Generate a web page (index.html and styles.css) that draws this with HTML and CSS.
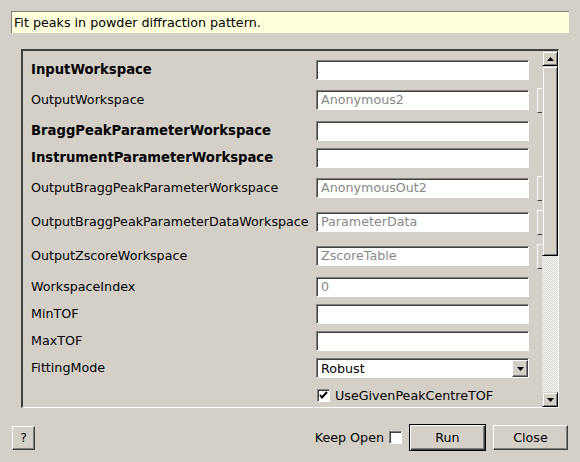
FILE: index.html
```html
<!DOCTYPE html>
<html lang="en">

<head>
  <meta charset="UTF-8" />
  <title>FitPowderDiffPeaks</title>
  <link rel="stylesheet" href="styles.css">
</head>

<body>
  <div class="dialog">

    <!-- Descripcion del algoritmo -->
    <div class="description">Fit peaks in powder diffraction pattern.</div>

    <!-- Propiedades -->
    <div class="scroll-frame">
      <div class="viewport">

        <div class="row">
          <span class="prop-label required">InputWorkspace</span>
          <div class="field"></div>
        </div>

        <div class="row tall">
          <span class="prop-label">OutputWorkspace</span>
          <div class="field">Anonymous2</div>
          <button class="browse"></button>
        </div>

        <div class="row">
          <span class="prop-label required">BraggPeakParameterWorkspace</span>
          <div class="field"></div>
        </div>

        <div class="row">
          <span class="prop-label required">InstrumentParameterWorkspace</span>
          <div class="field"></div>
        </div>

        <div class="row tall">
          <span class="prop-label">OutputBraggPeakParameterWorkspace</span>
          <div class="field">AnonymousOut2</div>
          <button class="browse"></button>
        </div>

        <div class="row tall">
          <span class="prop-label">OutputBraggPeakParameterDataWorkspace</span>
          <div class="field">ParameterData</div>
          <button class="browse"></button>
        </div>

        <div class="row tall">
          <span class="prop-label">OutputZscoreWorkspace</span>
          <div class="field">ZscoreTable</div>
          <button class="browse"></button>
        </div>

        <div class="row">
          <span class="prop-label">WorkspaceIndex</span>
          <div class="field">0</div>
        </div>

        <div class="row">
          <span class="prop-label">MinTOF</span>
          <div class="field"></div>
        </div>

        <div class="row">
          <span class="prop-label">MaxTOF</span>
          <div class="field"></div>
        </div>

        <div class="row">
          <span class="prop-label">FittingMode</span>
          <div class="combo">
            <span class="combo-text">Robust</span>
            <span class="combo-btn">
              <svg width="7" height="4" viewBox="0 0 7 4"><path d="M0 0h7L3.5 4z" fill="#000"/></svg>
            </span>
          </div>
        </div>

        <div class="row">
          <span class="prop-label"></span>
          <div class="check-field">
            <span class="check">
              <svg width="9" height="9" viewBox="0 0 9 9"><path d="M1 4l2 2.5L8 1" fill="none" stroke="#000" stroke-width="2"/></svg>
            </span>
            <span>UseGivenPeakCentreTOF</span>
          </div>
        </div>

      </div>

      <!-- Barra de desplazamiento -->
      <div class="scrollbar">
        <div class="sb-btn">
          <svg width="7" height="4" viewBox="0 0 7 4"><path d="M0 4h7L3.5 0z" fill="#000"/></svg>
        </div>
        <div class="sb-handle"></div>
        <div class="sb-track"></div>
        <div class="sb-btn">
          <svg width="7" height="4" viewBox="0 0 7 4"><path d="M0 0h7L3.5 4z" fill="#000"/></svg>
        </div>
      </div>
    </div>

    <!-- Botones -->
    <div class="buttons">
      <button class="btn help">?</button>
      <div class="spacer"></div>
      <span class="keep-open">Keep Open</span>
      <span class="check"></span>
      <button class="btn default">Run</button>
      <button class="btn">Close</button>
    </div>

  </div>
</body>

</html>
```

FILE: styles.css
```css
body {
  margin: 0;
  background: #d4d0c8;
  font-family: "DejaVu Sans", sans-serif;
  font-size: 12.7px;
  color: #000;
}

.dialog {
  width: 580px;
  height: 462px;
  padding-top: 11px;
  box-sizing: border-box;
}

.description {
  margin-left: 11px;
  width: 558px;
  height: 22px;
  box-sizing: border-box;
  background: #ffffdc;
  border-top: 1px solid #808080;
  border-left: 1px solid #808080;
  padding-left: 2px;
  line-height: 21px;
}

.scroll-frame {
  display: flex;
  margin: 16px 0 0 21px;
  width: 538px;
  height: 359px;
  box-sizing: border-box;
  border-style: solid;
  border-width: 2px 1px 1px 2px;
  border-color: #404040 #fff #fff #404040;
}

.viewport {
  flex: 1;
  overflow: hidden;
  padding: 9px 0 0 8px;
  display: flex;
  flex-direction: column;
  gap: 7px;
}

.row {
  display: flex;
  align-items: center;
  height: 20px;
  flex-shrink: 0;
}

.row.tall {
  height: 27px;
  align-items: flex-start;
}

.row.tall .field,
.row.tall .prop-label {
  margin-top: 3px;
}

.prop-label {
  width: 285px;
  flex-shrink: 0;
  white-space: nowrap;
  line-height: 20px;
}

.prop-label.required {
  font-weight: bold;
  font-size: 13.2px;
}

.field,
.combo {
  width: 213px;
  height: 20px;
  flex-shrink: 0;
  box-sizing: border-box;
  background: #fff;
  border: 1px solid;
  border-color: #808080 #fff #fff #808080;
  box-shadow: inset 1px 1px #404040;
  padding-left: 4px;
  line-height: 18px;
  color: #888;
  white-space: nowrap;
}

.combo {
  display: flex;
  padding: 1px 0 0 1px;
  color: #000;
}

.combo-text {
  flex: 1;
  padding-left: 3px;
  line-height: 17px;
}

.combo-btn {
  width: 16px;
  height: 17px;
  box-sizing: border-box;
  display: flex;
  align-items: center;
  justify-content: center;
  background: #d4d0c8;
  border: 1px solid;
  border-color: #fff #404040 #404040 #fff;
  box-shadow: inset -1px -1px #808080;
}

.browse {
  margin: 1px 0 0 8px;
  width: 60px;
  height: 25px;
  flex-shrink: 0;
  background: #d4d0c8;
  border: 1px solid;
  border-color: #fff #404040 #404040 #fff;
}

.check-field {
  display: flex;
  align-items: center;
  gap: 5px;
  padding-left: 1px;
}

.check {
  width: 13px;
  height: 13px;
  box-sizing: border-box;
  display: flex;
  align-items: center;
  justify-content: center;
  background: #fff;
  border: 1px solid;
  border-color: #808080 #fff #fff #808080;
  box-shadow: inset 1px 1px #404040;
  flex-shrink: 0;
}

.scrollbar {
  width: 16px;
  display: flex;
  flex-direction: column;
}

.sb-btn,
.sb-handle {
  box-sizing: border-box;
  background: #d4d0c8;
  border: 1px solid;
  border-color: #d4d0c8 #000 #000 #d4d0c8;
  box-shadow: inset 1px 1px #fff, inset -1px -1px #808080;
}

.sb-btn {
  height: 15px;
  display: flex;
  align-items: center;
  justify-content: center;
}

.sb-handle {
  height: 190px;
}

.sb-track {
  flex: 1;
  background: repeating-conic-gradient(#fff 0 25%, #d4d0c8 0 50%) 0 0 / 2px 2px;
}

.buttons {
  display: flex;
  align-items: center;
  gap: 7px;
  margin-top: 16px;
  padding: 0 12px;
  height: 27px;
}

.spacer {
  flex: 1;
}

.keep-open {
  margin-right: -2px;
}

.btn {
  height: 25px;
  width: 75px;
  box-sizing: border-box;
  background: #d4d0c8;
  border: 1px solid;
  border-color: #fff #404040 #404040 #fff;
  box-shadow: inset -1px -1px #808080;
  font-family: "DejaVu Sans", sans-serif;
  font-size: 12.7px;
  color: #000;
  padding: 0;
}

.btn.help {
  width: 23px;
  height: 24px;
}

.btn.default {
  width: 77px;
  height: 27px;
  border: 1px solid #000;
  box-shadow: inset 1px 1px #fff, inset -1px -1px #404040, inset -2px -2px #808080;
}
```
